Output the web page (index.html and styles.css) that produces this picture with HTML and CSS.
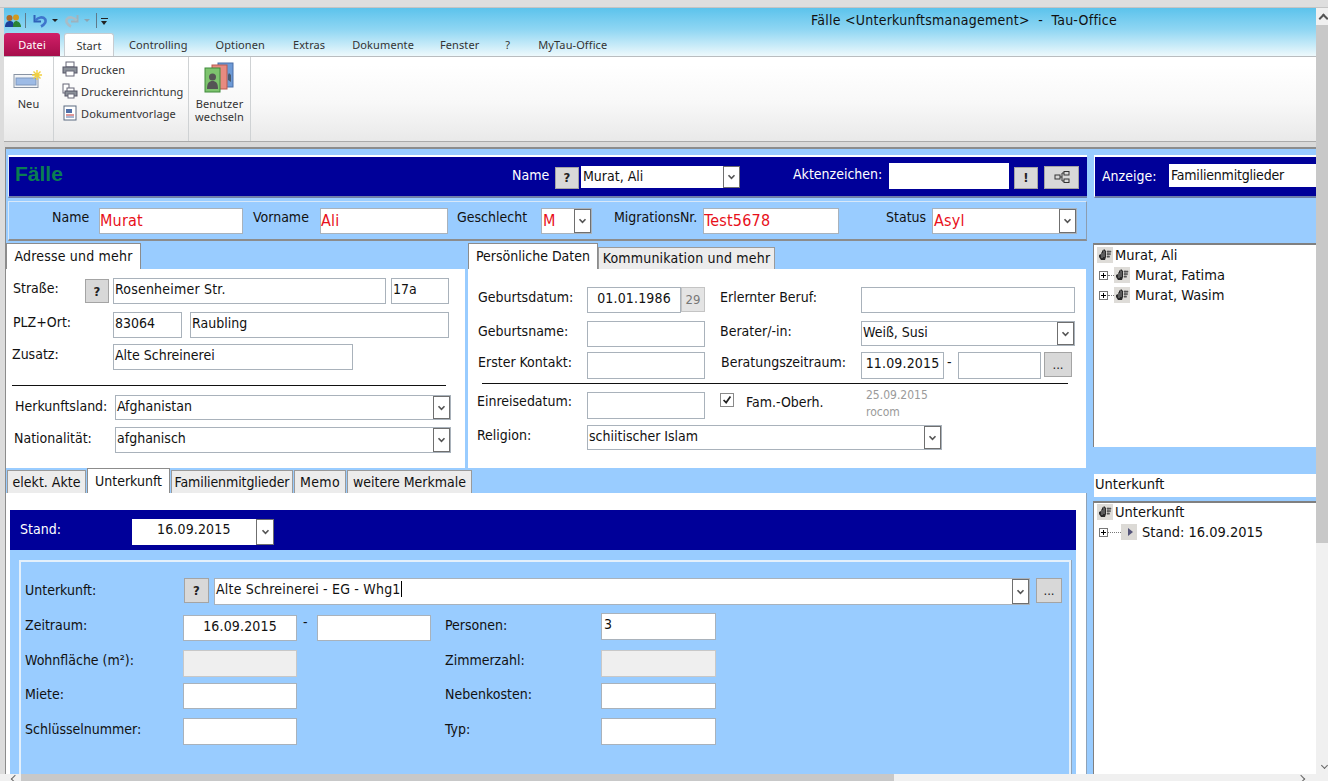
FILE: index.html
```html
<!DOCTYPE html>
<html lang="de">
<head>
<meta charset="utf-8">
<title>Fälle - Tau-Office</title>
<link rel="stylesheet" href="styles.css">
</head>
<body>
<svg class="defs" width="0" height="0" aria-hidden="true">
  <symbol id="chev" viewBox="0 0 9 6"><path d="M1.5 1.2 4.5 4.4 7.5 1.2" fill="none" stroke="#555" stroke-width="1.6"/></symbol>
  <symbol id="treeicon" viewBox="0 0 16 16"><rect width="16" height="16" fill="#dedcd8"/><path d="M2 10V8l2-1V5l1 1V3l1 1 1-2 1 1 1 1v6l-1 3H4z" fill="#2a2a2a"/><path d="M5 6v5M7 4v6" stroke="#bbb" stroke-width=".7"/><path d="M10 4h4v1.200h-4zM10 6.500h3.500v1.200H10zM10 9h2.500v1.200H10zM11 3.500v5" fill="#555" stroke="#555" stroke-width=".5"/></symbol>
  <symbol id="plus" viewBox="0 0 9 9"><rect x=".5" y=".5" width="8" height="8" fill="#fff" stroke="#777"/><path d="M2 4.500h5M4.500 2v5" stroke="#000"/></symbol>
</svg>
<div class="topband"></div>
<div class="shell">
  <div class="win">
    <header class="head">
      <div class="qat">
        <svg class="ic-users" viewBox="0 0 16 14"><circle cx="4.500" cy="4" r="3" fill="#b06a28"/><circle cx="11" cy="3.500" r="3" fill="#d09a20"/><path d="M0 13c0-4 2-6 5-6s4 2 4 6z" fill="#1c3f98"/><path d="M8 13c0-4 1-6 3-6s5 2 5 6z" fill="#2a8434"/></svg>
        <span class="qsep"></span>
        <svg class="ic-undo" viewBox="0 0 14 14"><path d="M1.500 1v6.500H8" fill="none" stroke="#2f62b8" stroke-width="2"/><path d="M2.500 6.500C5 3 10 2.500 12 5c1.500 2.500 0 5.500-4 7.500" fill="none" stroke="#3f75cc" stroke-width="2.600"/></svg>
        <span class="qdrop"></span>
        <svg class="ic-redo" viewBox="0 0 14 14"><path d="M12.500 1v6.500H6" fill="none" stroke="#9db2bd" stroke-width="2"/><path d="M11.500 6.500C9 3 4 2.500 2 5c-1.500 2.500 0 5.500 4 7.500" fill="none" stroke="#a9bcc6" stroke-width="2.600"/></svg>
        <span class="qdrop qdrop-off"></span>
        <span class="qsep qsep2"></span>
        <span class="qcustom"></span>
        <div class="apptitle">Fälle &lt;Unterkunftsmanagement&gt;  -  Tau-Office</div>
      </div>
      <nav class="rtabs">
        <span class="rtab rtab-file">Datei</span>
        <span class="rtab rtab-on">Start</span>
        <span class="rtab t-con">Controlling</span>
        <span class="rtab t-opt">Optionen</span>
        <span class="rtab t-ext">Extras</span>
        <span class="rtab t-dok">Dokumente</span>
        <span class="rtab t-fen">Fenster</span>
        <span class="rtab t-q">?</span>
        <span class="rtab t-my">MyTau-Office</span>
      </nav>
    </header>
    <section class="ribbon">
      <div class="rgroup g-new">
        <svg class="ic-new" viewBox="0 0 30 20"><rect x="1" y="4.500" width="24" height="13" fill="#f2f4f7" stroke="#8893a3"/><rect x="3" y="8" width="20" height="7" fill="#9dbbe6" stroke="#7f97bd"/><path d="M24 0v10M19 5h10M20.500 1.500l7 7M27.500 1.500l-7 7" stroke="#f2d03e" stroke-width="1.400"/></svg>
        <span>Neu</span>
      </div>
      <div class="rgroup g-print">
        <div class="ritem"><svg class="ic-small" viewBox="0 0 16 16"><rect x="4" y="1" width="8" height="5" fill="#fff" stroke="#667"/><rect x="1" y="6" width="14" height="6" fill="#8a9098" stroke="#556"/><rect x="4" y="10" width="8" height="5" fill="#fff" stroke="#667"/></svg>Drucken</div>
        <div class="ritem"><svg class="ic-small" viewBox="0 0 16 16"><rect x="1" y="1" width="6" height="9" fill="#fff" stroke="#667"/><rect x="5" y="5" width="7" height="4" fill="#fff" stroke="#667"/><rect x="3" y="8" width="12" height="5" fill="#8a9098" stroke="#556"/><rect x="6" y="11" width="6" height="4" fill="#fff" stroke="#667"/></svg>Druckereinrichtung</div>
        <div class="ritem"><svg class="ic-small" viewBox="0 0 16 16"><rect x="2" y="1" width="12" height="14" fill="#fff" stroke="#5a6a80"/><rect x="4" y="4" width="6" height="4" fill="#5070a8"/><path d="M4 10h8" stroke="#c03030"/><path d="M4 12h8" stroke="#5070a8"/></svg>Dokumentvorlage</div>
      </div>
      <div class="rgroup g-user">
        <svg class="ic-user" viewBox="0 0 32 32"><rect x="14" y="1" width="15" height="24" fill="#6d9ad6" stroke="#4a6fa8"/><rect x="8" y="3" width="15" height="24" fill="#e88a80" stroke="#b85a50"/><rect x="1" y="6" width="15" height="24" fill="#7ec46e" stroke="#3f8a3a"/><circle cx="8.500" cy="15" r="3.500" fill="#555"/><path d="M3 27c0-6 2-8 5.500-8s5.500 2 5.500 8z" fill="#555"/><path d="M24 18v-5l1-2 2 2v7z" fill="#4a5a70"/></svg>
        <span>Benutzer<br>wechseln</span>
      </div>
    </section>
    <div class="ribbon-gap"></div>
    <main class="main">
      <div class="left">
        <div class="navy hdr">
          <div class="brand">Fälle</div>
          <span class="hl-name">Name</span>
          <span class="btn b-q1">?</span>
          <div class="combo c-name"><span class="val">Murat, Ali</span><span class="arr"><svg><use href="#chev"/></svg></span></div>
          <span class="hl-akt">Aktenzeichen:</span>
          <div class="in in-akt"></div>
          <span class="btn b-ex">!</span>
          <span class="btn b-tree"><svg viewBox="0 0 16 12"><path d="M6 6h2M10 2H8v8h2" fill="none" stroke="#333"/><rect x="1" y="4" width="5" height="4" fill="none" stroke="#333"/><rect x="10" y="0.500" width="5" height="3.500" fill="none" stroke="#333"/><rect x="10" y="8" width="5" height="3.500" fill="none" stroke="#333"/></svg></span>
        </div>
        <div class="idrow">
          <span class="il il-name">Name</span><div class="in red in-name">Murat</div>
          <span class="il il-vor">Vorname</span><div class="in red in-vor">Ali</div>
          <span class="il il-ges">Geschlecht</span><div class="combo red c-ges"><span class="val">M</span><span class="arr"><svg><use href="#chev"/></svg></span></div>
          <span class="il il-mig">MigrationsNr.</span><div class="in red in-mig">Test5678</div>
          <span class="il il-sta">Status</span><div class="combo red c-sta"><span class="val">Asyl</span><span class="arr"><svg><use href="#chev"/></svg></span></div>
        </div>
        <div class="panels">
          <section class="pane pane-addr">
            <div class="tabs">
              <span class="tab tab-on t-adr">Adresse und mehr</span>
            </div>
            <div class="body addr">
              <div class="frow r1"><span class="lbl w72">Straße:</span><span class="btn b-q2">?</span><div class="in w273 wide">Rosenheimer Str.</div><div class="in w58">17a</div></div>
              <div class="frow r2"><span class="lbl w100">PLZ+Ort:</span><div class="in w69">83064</div><div class="in w259">Raubling</div></div>
              <div class="frow r3"><span class="lbl w100 nudge">Zusatz:</span><div class="in w240">Alte Schreinerei</div></div>
              <hr class="rule addr-rule">
              <div class="frow r4"><span class="lbl w100 low nudge2">Herkunftsland:</span><div class="combo w336"><span class="val">Afghanistan</span><span class="arr"><svg><use href="#chev"/></svg></span></div></div>
              <div class="frow r5"><span class="lbl w100 low nudge3">Nationalität:</span><div class="combo w336 h26"><span class="val">afghanisch</span><span class="arr"><svg><use href="#chev"/></svg></span></div></div>
            </div>
          </section>
          <section class="pane pane-pers">
            <div class="tabs">
              <span class="tab tab-on t-per">Persönliche Daten</span>
              <span class="tab t-kom">Kommunikation und mehr</span>
            </div>
            <div class="body pers">
              <div class="frow p1"><span class="lbl w109">Geburtsdatum:</span><div class="in w94 ctr">01.01.1986</div><span class="btn b-29">29</span><span class="lbl w141 ml15">Erlernter Beruf:</span><div class="in w214"></div></div>
              <div class="frow p2"><span class="lbl w109">Geburtsname:</span><div class="in w118"></div><span class="lbl w141 ml15">Berater/-in:</span><div class="combo w214"><span class="val">Weiß, Susi</span><span class="arr"><svg><use href="#chev"/></svg></span></div></div>
              <div class="frow p3"><span class="lbl w109">Erster Kontakt:</span><div class="in w118 tall"></div><span class="lbl w140 ml16">Beratungszeitraum:</span><div class="in w83 ctr tall">11.09.2015</div><span class="dash">-</span><div class="in w83 tall"></div><span class="btn b-dots">...</span></div>
              <hr class="rule pers-rule">
              <div class="frow p4"><span class="lbl w109 nudge up1">Einreisedatum:</span><div class="in w118 tall"></div><span class="check"><svg viewBox="0 0 14 14"><path d="M3 7l3 3 5-7" fill="none" stroke="#222" stroke-width="2"/></svg></span><span class="lbl famo">Fam.-Oberh.</span><div class="meta"><div>25.09.2015</div><div>rocom</div></div></div>
              <div class="frow p5"><span class="lbl w109 nudge">Religion:</span><div class="combo w355"><span class="val">schiitischer Islam</span><span class="arr"><svg><use href="#chev"/></svg></span></div></div>
            </div>
          </section>
        </div>
        <div class="tabs lower-tabs">
          <span class="tab t-ele">elekt. Akte</span>
          <span class="tab tab-on t-unt">Unterkunft</span>
          <span class="tab t-fam">Familienmitglieder</span>
          <span class="tab t-mem">Memo</span>
          <span class="tab t-wei">weitere Merkmale</span>
        </div>
        <div class="lower">
          <div class="navy stand">
            <span class="st-l">Stand:</span>
            <div class="combo c-stand"><span class="val ctrv">16.09.2015</span><span class="arr"><svg><use href="#chev"/></svg></span></div>
          </div>
          <div class="standbody">
            <div class="inner">
              <div class="frow u1"><span class="lbl w159 low2">Unterkunft:</span><span class="btn b-q3">?</span><div class="combo c-unt"><span class="val wide">Alte Schreinerei - EG - Whg1<i class="caret"></i></span><span class="arr"><svg><use href="#chev"/></svg></span></div><span class="btn b-dots2">...</span></div>
              <div class="frow u2"><span class="lbl w158">Zeitraum:</span><div class="in w114 ctr">16.09.2015</div><span class="dash d2">-</span><div class="in w114"></div><span class="lbl w156 ml14">Personen:</span><div class="in w115 up2">3</div></div>
              <div class="frow u3"><span class="lbl w158">Wohnfläche (m²):</span><div class="in w114 dis tall"></div><span class="lbl w156 ml148">Zimmerzahl:</span><div class="in w115 dis tall"></div></div>
              <div class="frow u4"><span class="lbl w158 low">Miete:</span><div class="in w114"></div><span class="lbl w156 ml148 low">Nebenkosten:</span><div class="in w115"></div></div>
              <div class="frow u5"><span class="lbl w158 low">Schlüsselnummer:</span><div class="in w114 tall"></div><span class="lbl w156 ml148 low">Typ:</span><div class="in w115 tall"></div></div>
            </div>
          </div>
        </div>
      </div>
      <aside class="right">
        <div class="navy rhdr"><span class="anz">Anzeige:</span><div class="in in-anz">Familienmitglieder</div></div>
        <div class="tree tree1">
          <div class="node"><svg class="ti ti-root"><use href="#treeicon"/></svg>Murat, Ali</div>
          <div class="node sub"><svg class="pl"><use href="#plus"/></svg><i class="dots"></i><svg class="ti"><use href="#treeicon"/></svg>Murat, Fatima</div>
          <div class="node sub"><svg class="pl"><use href="#plus"/></svg><i class="dots"></i><svg class="ti"><use href="#treeicon"/></svg>Murat, Wasim</div>
        </div>
        <div class="strip">Unterkunft</div>
        <div class="tree tree2">
          <div class="node"><svg class="ti ti-root"><use href="#treeicon"/></svg>Unterkunft</div>
          <div class="node sub"><svg class="pl"><use href="#plus"/></svg><i class="dots dots-long"></i><span class="ti-play"></span>Stand: 16.09.2015</div>
        </div>
      </aside>
    </main>
    <div class="hscroll"><span class="thumb-h"></span></div>
  </div>
  <div class="vscroll"><span class="v-up"></span><span class="thumb-v"></span><span class="v-down"></span></div>
</div>
</body>
</html>
```
FILE: styles.css
```css
* { box-sizing: border-box; }
html, body { margin: 0; height: 781px; overflow: hidden; }
body {
  width: 1328px;
  background: #dedede;
  font-family: "DejaVu Sans Condensed", "Noto Sans", sans-serif;
  font-size: 14px;
  color: #111;
}
.defs { position: absolute; }
.topband { height: 8px; background: #dedede; border-bottom: 1px solid #c4c4c4; }
.shell { display: flex; height: 773px; }
.win { width: 1316px; padding-left: 4px; display: flex; flex-direction: column; background: #dcdcdc; }
.vscroll { width: 12px; background: #f0f0f0; position: relative; display: flex; flex-direction: column; }
.v-up { display: block; height: 17px; position: relative; }
.v-up::after { content: ""; position: absolute; left: 4px; top: 7px; width: 5px; height: 5px; border-left: 2px solid #555; border-top: 2px solid #555; transform: rotate(45deg); }
.thumb-v { display: block; height: 518px; background: #c8c8c8; }
.v-down { position: absolute; left: 6px; bottom: 13px; width: 5px; height: 5px; border-right: 1px solid #666; border-bottom: 1px solid #666; transform: rotate(45deg); }

/* window head */
.head { height: 48px; background: linear-gradient(#5cc3ec, #8fd6f3 45%, #eef9fc); }
.qat { height: 25px; display: flex; align-items: center; position: relative; }
.ic-users { width: 16px; height: 14px; margin-left: 1px; }
.qsep { width: 1px; height: 15px; background: #5f7a8a; margin: 0 7px 0 4px; }
.qsep2 { margin: 0 4px 0 6px; }
.ic-undo { width: 14px; height: 14px; }
.ic-redo { width: 14px; height: 14px; margin-left: 7px; }
.qdrop { width: 0; height: 0; border: 3px solid transparent; border-top: 3px solid #222; border-bottom: 0; margin-left: 5px; }
.qdrop-off { border-top-color: #8ea4b0; }
.qcustom { width: 7px; height: 6px; border-top: 1px solid #222; position: relative; }
.qcustom::after { content: ""; position: absolute; top: 2px; left: 0; border: 3.5px solid transparent; border-top: 4px solid #222; border-bottom: 0; }
.apptitle { position: absolute; left: 807px; top: 3px; font: 14px/18px "DejaVu Sans Condensed", "Noto Sans", sans-serif; letter-spacing: .25px; white-space: pre; }
.rtabs { height: 23px; display: flex; align-items: flex-end; font: 11px/23px "Noto Sans", sans-serif; letter-spacing: .1px; color: #333; }
.rtab { display: block; height: 23px; text-align: center; }
.rtab-file { width: 56px; background: linear-gradient(#d21f68, #a60e4b); color: #fff; border-radius: 3px 3px 0 0; }
.rtab-on { width: 50px; margin-left: 4px; background: linear-gradient(#fff, #fafbfc); border: 1px solid #c8ccd0; border-bottom: 0; border-radius: 3px 3px 0 0; line-height: 24px; }
.t-con { margin-left: 15px; }
.t-opt { margin-left: 28px; }
.t-ext { margin-left: 28px; }
.t-dok { margin-left: 27px; }
.t-fen { margin-left: 26px; }
.t-q { margin-left: 26px; }
.t-my { margin-left: 28px; }

/* ribbon */
.ribbon { height: 86px; display: flex; background: linear-gradient(#fff 10%, #f8f8f8 55%, #e9e9e9); border-top: 1px solid #b9bdc0; border-bottom: 1px solid #aaa; font: 11px/13px "Noto Sans", sans-serif; letter-spacing: .1px; color: #333; }
.rgroup { border-right: 1px solid #cfd2d4; height: 84px; }
.g-new { width: 50px; display: flex; flex-direction: column; align-items: center; padding-top: 13px; }
.ic-new { width: 30px; height: 20px; margin-bottom: 7px; margin-left: -2px; }
.g-print { width: 135px; padding: 1px 0 0 8px; }
.ritem { display: flex; align-items: center; gap: 3px; height: 22px; }
.ic-small { width: 16px; height: 16px; }
.g-user { width: 62px; text-align: center; padding-top: 5px; }
.ic-user { width: 32px; height: 32px; display: block; margin: 0 auto 3px; }
.ribbon-gap { height: 5px; background: #d9d9d9; }

/* main */
.main { height: 627px; display: flex; margin-left: 1px; background: #99ccff; border-top: 2px solid #8c8c8c; border-left: 1px solid #8c8c8c; }
.left { width: 1081px; }
.navy { background: #000099; color: #fff; }
.hdr { height: 43px; margin: 6px 0 0 2px; border-top: 2px solid #fff; border-left: 1px solid #dfe9f5; border-bottom: 2px solid #6e7fa8; display: flex; align-items: center; position: relative; }
.brand { font: bold 21px/24px "Liberation Sans", sans-serif; color: #0a7d52; margin: -5px 0 0 6px; width: 497px; }
.hl-name { width: 43px; margin-top: -3px; }
.btn { display: flex; align-items: center; justify-content: center; background: #d8d8d8; border: 1px solid #a4a4a4; color: #222; font-weight: bold; font-size: 13px; flex: none; }
.b-q1 { width: 24px; height: 22px; margin-top: 2px; }
.combo, .in { background: #fff; border: 1px solid #a9b2bb; color: #111; line-height: 20px; padding: 0 1px; white-space: nowrap; overflow: hidden; }
.combo { display: flex; justify-content: space-between; padding: 0; height: 25px; }
.h26 { height: 26px; }
.val { padding: 0 1px; }
.wide { letter-spacing: .2px; }
.arr { width: 17px; height: 100%; flex: none; background: #fff; border: 1px solid #6f6f6f; display: flex; align-items: center; justify-content: center; }
.arr svg { width: 9px; height: 6px; }
.c-name { width: 159px; height: 22px; margin: 1px 0 0 2px; border: 0; }
.c-name .val { padding-left: 2px; }
.hl-akt { margin: -6px 0 0 53px; width: 96px; }
.in-akt { width: 120px; height: 23px; border: 0; margin-top: -2px; }
.b-ex { width: 24px; height: 22px; margin: 2px 0 0 5px; }
.b-tree { width: 35px; height: 23px; margin: 1px 0 0 6px; }
.b-tree svg { width: 16px; height: 12px; }

.idrow { height: 40px; margin: 3px 0 0 2px; border-top: 1px solid #d8e8f8; border-left: 1px solid #d8e8f8; border-right: 1px solid #8c9db0; border-bottom: 2px solid #8c8c8c; display: flex; align-items: flex-start; padding-top: 6px; }
.il { line-height: 20px; margin-top: -1px; }
.red { color: #e8101a; font-size: 16px; letter-spacing: .2px; }
.in-name, .in-vor, .in-mig { height: 26px; line-height: 24px; padding: 0; }
.il-name { margin-left: 43px; width: 47px; }
.in-name { width: 144px; }
.il-vor { margin-left: 10px; width: 67px; }
.in-vor { width: 128px; }
.il-ges { margin-left: 9px; width: 84px; }
.c-ges { width: 51px; height: 26px; }
.il-mig { margin-left: 22px; width: 89px; }
.in-mig { width: 136px; }
.il-sta { margin-left: 47px; width: 46px; }
.c-sta { width: 145px; height: 26px; }
.red .val { line-height: 24px; padding: 0 0 0 1px; }

.panels { display: flex; margin-top: 2px; height: 225px; }
.pane { display: flex; flex-direction: column; }
.pane-addr { width: 459px; }
.pane-pers { width: 618px; margin-left: 3px; }
.tabs { height: 26px; display: flex; align-items: flex-end; }
.tab { display: block; height: 22px; line-height: 21px; background: #ececec; border: 1px solid #9a9a9a; border-bottom: 0; text-align: center; white-space: nowrap; }
.tab-on { height: 26px; line-height: 24px; background: #fff; border-color: #8c8c8c; }
.t-adr { width: 135px; letter-spacing: .2px; }
.t-per { width: 130px; }
.t-kom { width: 177px; letter-spacing: .2px; }
.body { flex: 1; background: #fff; }

.frow { display: flex; align-items: flex-start; }
.lbl { line-height: 20px; white-space: nowrap; flex: none; }
.rule { height: 1px; border: 0; background: #111; margin: 0; }
.in { height: 26px; flex: none; }
.combo { flex: none; }

.addr { padding-left: 7px; padding-top: 9px; }
.r2 { margin-top: 8px; }
.r3 { margin-top: 6px; }
.r4 { margin-top: 9px; }
.r5 { margin-top: 7px; }
.addr-rule { width: 434px; margin: 15px 0 0 -1px; }
.w72 { width: 72px; }
.w100 { width: 100px; }
.nudge { margin-left: -1px; margin-right: 1px; }
.nudge2 { margin-left: 2px; }
.nudge3 { margin-left: 1px; margin-right: 1px; }
.low { padding-top: 1px; }
.low2 { padding-top: 2px; }
.up1 { margin-top: -1px; }
.b-q2 { width: 24px; height: 24px; margin: 1px 4px 0 0; }
.w273 { width: 273px; }
.w58 { width: 58px; margin-left: 5px; }
.w69 { width: 69px; }
.w259 { width: 259px; margin-left: 8px; }
.w240 { width: 240px; }
.w336 { width: 336px; }

.pers { padding: 18px 0 0 10px; }
.p2 { margin-top: 8px; }
.p3 { margin-top: 5px; }
.p4 { margin-top: 8px; }
.p5 { margin-top: 6px; }
.pers-rule { width: 586px; margin: 4px 0 0 4px; }
.w109 { width: 109px; }
.w94 { width: 94px; }
.w118 { width: 118px; }
.w141 { width: 141px; }
.w140 { width: 140px; }
.w214 { width: 214px; }
.w83 { width: 83px; }
.w355 { width: 355px; }
.ctr { text-align: center; letter-spacing: .15px; }
.tall { height: 27px; }
.ml15 { margin-left: 15px; }
.ml16 { margin-left: 16px; }
.b-29 { width: 24px; height: 25px; background: #e4e4e4; color: #777; font-weight: normal; font-size: 13px; border-color: #c4c4c4; }
.dash { width: 14px; text-align: left; padding-left: 3px; line-height: 20px; flex: none; }
.b-dots { width: 28px; height: 25px; margin-left: 3px; font-weight: normal; }
.check { width: 14px; height: 14px; border: 1px solid #8a8a8a; margin: 1px 0 0 15px; background: #fff; display: block; flex: none; }
.check svg { display: block; width: 12px; height: 12px; }
.famo { margin-left: 12px; width: 120px; }
.meta { color: #9a9a9a; font-size: 12px; line-height: 17px; margin-top: -5px; height: 27px; }

.lower-tabs { height: 25px; padding-left: 1px; }
.lower-tabs .tab { height: 23px; line-height: 23px; margin-right: 1px; }
.lower-tabs .tab-on { height: 25px; line-height: 25px; }
.t-ele { width: 79px; }
.t-unt { width: 83px; }
.t-fam { width: 122px; letter-spacing: -.1px; }
.t-mem { width: 52px; letter-spacing: .3px; }
.t-wei { width: 125px; }
.lower { height: 281px; background: #fff; padding: 17px 10px 0 4px; border-right: 1px solid #8fa3b8; }
.stand { height: 40px; display: flex; align-items: flex-start; padding-top: 9px; }
.st-l { margin-left: 10px; width: 112px; line-height: 20px; }
.c-stand { width: 142px; height: 26px; border: 0; justify-content: flex-end; position: relative; }
.ctrv { position: absolute; left: 24px; top: 0; line-height: 20px; letter-spacing: .15px; }
.c-stand .arr { width: 18px; }
.standbody { height: 224px; background: #99ccff; padding: 10px 5px 0 9px; }
.inner { height: 214px; background: #99ccff; border: 2px solid #e4f0fb; border-bottom: 0; box-shadow: 1px 0 0 #8fa3b8; padding: 16px 0 0 4px; }
.u2 { margin-top: 10px; }
.u3 { margin-top: 9px; }
.u4 { margin-top: 6px; }
.u5 { margin-top: 9px; }
.w159 { width: 159px; }
.w158 { width: 158px; }
.w156 { width: 156px; }
.w114 { width: 114px; }
.w115 { width: 115px; }
.ml14 { margin-left: 14px; }
.ml148 { margin-left: 148px; }
.up2 { margin-top: -2px; padding-left: 2px; height: 27px; }
.dis { background: #efefef; border-color: #c8c8c8; }
.d2 { width: 20px; padding-left: 6px; line-height: 14px; }
.b-q3 { width: 25px; height: 25px; margin-right: 5px; }
.c-unt { width: 816px; height: 27px; }
.caret { display: inline-block; width: 1px; height: 16px; background: #000; vertical-align: -3px; }
.b-dots2 { width: 26px; height: 25px; margin-left: 6px; font-weight: normal; }

/* right column */
.right { width: 229px; display: flex; flex-direction: column; }
.rhdr { height: 43px; margin: 6px 0 0 7px; border-top: 2px solid #fff; border-left: 1px solid #fff; border-bottom: 2px solid #6e7fa8; display: flex; align-items: center; }
.anz { margin-left: 7px; width: 68px; margin-top: -2px; }
.in-anz { width: 147px; height: 23px; border: 0; margin-top: -2px; letter-spacing: -.2px; padding-left: 2px; line-height: 22px; }
.tree { background: #fff; border-top: 2px solid #808080; border-left: 1px solid #808080; margin-left: 6px; font-size: 14.500px; }
.tree1 { height: 204px; margin-top: 45px; }
.strip { height: 23px; margin: 27px 0 0 7px; background: #fff; line-height: 20px; padding-left: 1px; font-size: 14.500px; }
.tree2 { height: 273px; margin-top: 4px; }
.tree2 .node:first-child { margin-top: -1px; }
.node { height: 20px; line-height: 20px; display: flex; align-items: center; padding-left: 3px; white-space: nowrap; }
.ti { width: 16px; height: 16px; margin-right: 5px; flex: none; }
.ti-root { margin-right: 2px; }
.sub { padding-left: 5px; }
.pl { width: 9px; height: 9px; flex: none; }
.dots { width: 6px; border-top: 1px dotted #777; flex: none; }
.dots-long { width: 13px; }
.ti-play { width: 16px; height: 16px; margin-right: 5px; flex: none; background: #dcdad6; position: relative; }
.ti-play::after { content: ""; position: absolute; left: 7px; top: 4px; border: 4px solid transparent; border-left: 5px solid #55557a; border-right: 0; }

.hscroll { height: 7px; background: #f0f0f0; margin-left: -4px; padding-left: 21px; position: relative; }
.hscroll::before { content: ""; position: absolute; left: 12px; top: 2px; width: 5px; height: 5px; border-left: 1px solid #666; border-bottom: 1px solid #666; transform: rotate(45deg); }
.hscroll::after { content: ""; position: absolute; right: 12px; top: 2px; width: 5px; height: 5px; border-right: 1px solid #666; border-top: 1px solid #666; transform: rotate(45deg); }
.thumb-h { display: block; width: 873px; height: 7px; background: #c8c8c8; }
```
